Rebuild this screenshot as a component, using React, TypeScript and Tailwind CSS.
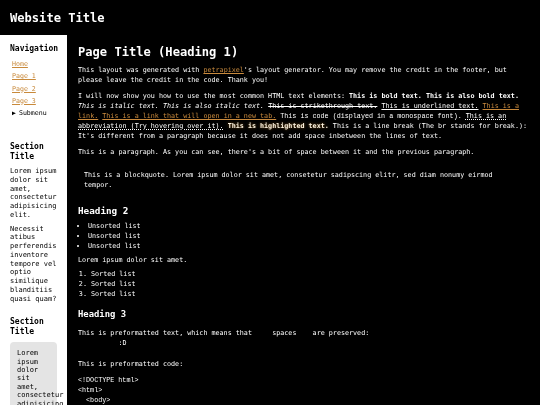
import React from "react";

const mono = { fontFamily: '"DejaVu Sans Mono", monospace' };

export default function App() {
  return (
    <div className="w-[540px] h-[405px] overflow-hidden bg-black text-white [will-change:transform]" style={mono}>
      <header className="h-[35px] flex items-center px-[10px] bg-black">
        <div className="text-[12.1px] leading-[16px] font-bold text-white">Website Title</div>
      </header>
      <div className="flex h-[370px]">
        <aside className="w-[67px] shrink-0 bg-white text-black overflow-hidden px-[10px] pt-[9px]">
          <div className="text-[8px] leading-[10px] font-bold">Navigation</div>
          <nav className="mt-[5px] text-[6.6px] leading-[10px]">
            <a className="block pl-[2px] text-[#c8893a] underline decoration-1 underline-offset-[1px]">Home</a>
            <a className="block pl-[2px] mt-[2.25px] text-[#c8893a] underline decoration-1 underline-offset-[1px]">Page 1</a>
            <a className="block pl-[2px] mt-[2.25px] text-[#c8893a] underline decoration-1 underline-offset-[1px]">Page 2</a>
            <a className="block pl-[2px] mt-[2.25px] text-[#c8893a] underline decoration-1 underline-offset-[1px]">Page 3</a>
            <div className="pl-[2px] mt-[2.25px] flex items-center">
              <span className="text-[6.5px] leading-[10px] mr-[3px]">▶</span>
              <span>Submenu</span>
            </div>
          </nav>
          <div className="mt-[24px] text-[8px] leading-[10px] font-bold">Section Title</div>
          <p className="mt-[5px] text-[7px] leading-[8.75px]">Lorem ipsum dolor sit amet, consectetur adipisicing elit.</p>
          <p className="mt-[5px] text-[7px] leading-[8.75px]">Necessit atibus perferendis inventore tempore vel optio similique blanditiis quasi quam?</p>
          <div className="mt-[14px] text-[8px] leading-[10px] font-bold">Section Title</div>
          <div className="mt-[5px] bg-[#e4e4e4] rounded-[4px] pt-[7px] pb-[7px] pl-[7px] pr-[7px] text-[7px] leading-[8.4px]">
            Lorem ipsum dolor sit amet, consectetur adipisicing elit.
          </div>
        </aside>
        <main className="flex-1 pl-[11px] pr-[10px] pt-[9px] text-[6.72px] leading-[10px]">
          <h1 className="text-[12.1px] leading-[16px] font-bold text-white">Page Title (Heading 1)</h1>
          <p className="mt-[5px]">
            This layout was generated with{" "}
            <a className="text-[#c98a3d] underline decoration-1 underline-offset-[1px]">petrapixel</a>'s layout generator. You may remove the credit in the footer, but please leave the credit in the code. Thank you!
          </p>
          <p className="mt-[6px]">
            I will now show you how to use the most common HTML text elements: <b className="text-white">This is bold text.</b>{" "}
            <strong className="text-white">This is also bold text.</strong> <i>This is italic text.</i>{" "}
            <em>This is also italic text.</em> <s>This is strikethrough text.</s>{" "}
            <u className="decoration-1 underline-offset-[1px]">This is underlined text.</u>{" "}
            <a className="text-[#c98a3d] underline decoration-1 underline-offset-[1px]">This is a link.</a>{" "}
            <a className="text-[#c98a3d] underline decoration-1 underline-offset-[1px]">This is a link that will open in a new tab.</a>{" "}
            <code>This is code (displayed in a monospace font).</code>{" "}
            <abbr className="underline decoration-dotted decoration-1 underline-offset-[1px]">This is an abbreviation (Try hovering over it).</abbr>{" "}
            <mark className="bg-transparent font-bold text-[#fff6e4] [text-shadow:0_0_3px_#8a5a1a]">This is highlighted text.</mark>{" "}
            This is a line break (The br stands for break.):
            <br />
            It's different from a paragraph because it does not add space inbetween the lines of text.
          </p>
          <p className="mt-[6px]">
            This is a paragraph. As you can see, there's a bit of space between it and the previous paragraph.
          </p>
          <blockquote className="mt-[13px] mx-[6px]">
            This is a blockquote. Lorem ipsum dolor sit amet, consetetur sadipscing elitr, sed diam nonumy eirmod tempor.
          </blockquote>
          <h2 className="mt-[15px] text-[9.3px] leading-[12px] font-bold text-white">Heading 2</h2>
          <ul className="mt-[4px] list-disc pl-[10px]">
            <li>Unsorted list</li>
            <li>Unsorted list</li>
            <li>Unsorted list</li>
          </ul>
          <p className="mt-[4px]">Lorem ipsum dolor sit amet.</p>
          <ol className="mt-[4px] list-decimal pl-[13px]">
            <li>Sorted list</li>
            <li>Sorted list</li>
            <li>Sorted list</li>
          </ol>
          <h3 className="mt-[9px] text-[8.9px] leading-[12px] font-bold text-white">Heading 3</h3>
          <pre className="mt-[8px] text-[6.72px] leading-[10px]" style={mono}>
{`This is preformatted text, which means that     spaces    are preserved:
          :D`}
          </pre>
          <p className="mt-[11px]">This is preformatted code:</p>
          <pre className="mt-[6px] text-[6.72px] leading-[10px]" style={{ fontFamily: '"Liberation Mono", monospace' }}>
{`<!DOCTYPE html>
<html>
  <body>
    <p>Hello</p>
  </body>
</html>`}
          </pre>
        </main>
      </div>
    </div>
  );
}
